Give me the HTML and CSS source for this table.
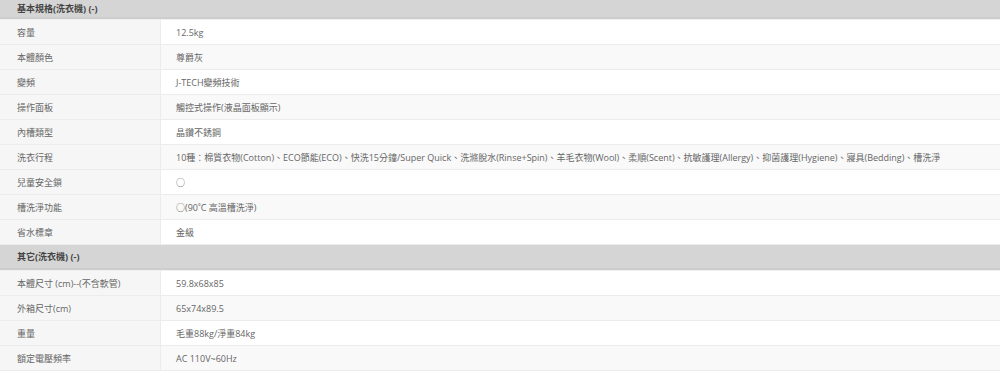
FILE: index.html
```html
<!DOCTYPE html>
<html lang="zh-Hant">
<head>
<meta charset="utf-8">
<link rel="stylesheet" href="styles.css">
</head>
<body>
<div class="spec">
  <div class="group first">基本規格(洗衣機) (-)</div>
  <div class="row"><div class="label">容量</div><div class="value">12.5kg</div></div>
  <div class="row alt"><div class="label">本體顏色</div><div class="value">尊爵灰</div></div>
  <div class="row"><div class="label">變頻</div><div class="value">J-TECH變頻技術</div></div>
  <div class="row alt"><div class="label">操作面板</div><div class="value">觸控式操作(液晶面板顯示)</div></div>
  <div class="row"><div class="label">內槽類型</div><div class="value">晶鑽不銹鋼</div></div>
  <div class="row alt"><div class="label">洗衣行程</div><div class="value">10種：棉質衣物(Cotton)、ECO節能(ECO)、快洗15分鐘/Super Quick、洗滌脫水(Rinse+Spin)、羊毛衣物(Wool)、柔順(Scent)、抗敏護理(Allergy)、抑菌護理(Hygiene)、寢具(Bedding)、槽洗淨</div></div>
  <div class="row"><div class="label">兒童安全鎖</div><div class="value">○</div></div>
  <div class="row alt"><div class="label">槽洗淨功能</div><div class="value">○(90˚C 高溫槽洗淨)</div></div>
  <div class="row"><div class="label">省水標章</div><div class="value">金級</div></div>
  <div class="group">其它(洗衣機) (-)</div>
  <div class="row"><div class="label">本體尺寸 (cm)--(不含軟管)</div><div class="value">59.8x68x85</div></div>
  <div class="row alt"><div class="label">外箱尺寸(cm)</div><div class="value">65x74x89.5</div></div>
  <div class="row"><div class="label">重量</div><div class="value">毛重88kg/淨重84kg</div></div>
  <div class="row alt"><div class="label">額定電壓頻率</div><div class="value">AC 110V~60Hz</div></div>
</div>
</body>
</html>
```
FILE: styles.css
```css
html, body {
  margin: 0;
  padding: 0;
  background: #ffffff;
}
body {
  font-family: "Open Sans", "Noto Sans CJK TC", sans-serif;
  font-size: 9px;
  color: #666666;
}
.spec {
  display: flex;
  flex-direction: column;
  width: 1000px;
}
.group {
  height: 23px;
  line-height: 23px;
  padding-left: 17px;
  background: #d5d5d5;
  border-bottom: 2px solid #cdcdcd;
  color: #444444;
  font-weight: bold;
}
.group.first {
  height: 17px;
  line-height: 17px;
}
.row {
  display: flex;
  height: 24px;
  border-bottom: 1px solid #ececec;
}
.group + .row {
  border-top: 1px solid #f0f0f0;
  height: 24px;
}
.label {
  width: 143px;
  flex: none;
  padding-left: 17px;
  display: flex;
  align-items: center;
  background: #f6f6f6;
  border-right: 1px solid #ececec;
}
.value {
  flex: 1;
  padding-left: 15px;
  display: flex;
  align-items: center;
  background: #ffffff;
  white-space: nowrap;
}
.row.alt .value { background: #f9f9f9; }
```
